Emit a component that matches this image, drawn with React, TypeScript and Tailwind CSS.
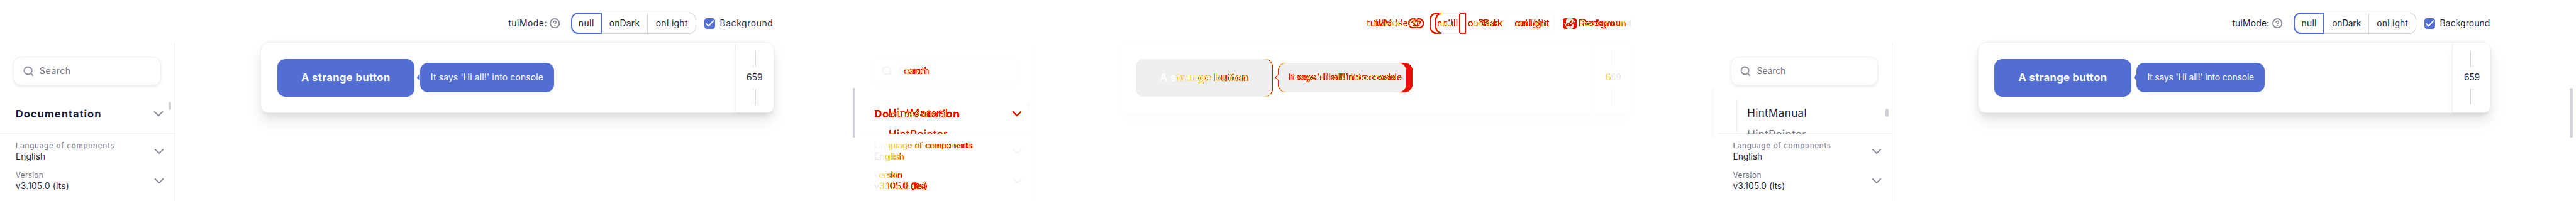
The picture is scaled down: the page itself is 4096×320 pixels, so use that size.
import type { ReactNode } from "react";

type Variant = "before" | "after";

const styles = {
  before: {
    search: "tracking-[0.58px]",
    language: "tracking-[0.72px]",
    english: "tracking-[0px]",
    version: "tracking-[0.34px]",
    number: "tracking-[0.15px]",
    label: "ml-[529.9px] w-[65.6px] tracking-[0.53px]",
    none: "w-[49px] tracking-[0.49px]",
    dark: "w-[73.4px] tracking-[0.2px]",
    light: "w-[77px] tracking-[0.25px]",
    background: "ml-[7.6px] tracking-[0.61px]",
    button: "w-[218.4px] tracking-[0.46px]",
    hint: "ml-[8.8px] w-[213.3px] tracking-[0.17px]",
    width: "tracking-[-0.05px]",
  },
  after: {
    search: "tracking-[-0.1px]",
    language: "tracking-[0.66px]",
    english: "tracking-[-0.1px]",
    version: "tracking-[0.52px]",
    number: "tracking-[-0.02px]",
    label: "ml-[540.2px] w-[64px] tracking-[0.22px]",
    none: "w-[48.9px] tracking-[0.32px]",
    dark: "w-[71px] tracking-[-0.28px]",
    light: "w-[75.2px] tracking-[0.09px]",
    background: "ml-[7.6px] tracking-[0.11px]",
    button: "w-[217.4px] tracking-[0.4px]",
    hint: "ml-[8.6px] w-[204px] tracking-[-0.15px]",
    width: "tracking-[-0.3px]",
  },
};

const normalPalette =
  "[--ink:#1b1f3b] [--muted:#6f7081] [--icon:#8f90a0] [--line:#ededed] [--seg:#d7d7d7] [--accent:#526ed3] [--paper:#ffffff] [--card:#ffffff] [--thumb:#d1d2d8] [--near:rgba(0,0,0,0.07)] [--far:rgba(0,0,0,0.09)]";
const maskPalette =
  "bg-black [--ink:#ffffff] [--muted:#ffffff] [--icon:#ffffff] [--line:transparent] [--seg:transparent] [--accent:#ffffff] [--paper:#000000] [--card:transparent] [--thumb:transparent] [--near:transparent] [--far:transparent]";

function Chevron({ className }: { className: string }) {
  return (
    <svg className={`h-[10px] w-[16px] shrink-0 ${className}`} viewBox="0 0 16 10" fill="none" stroke="var(--icon)" strokeWidth="2.1" strokeLinecap="round" strokeLinejoin="round">
      <path d="M1.7 1.9 8 8.1 14.3 1.9" />
    </svg>
  );
}

function SearchIcon() {
  return (
    <svg className="ml-[14.2px] h-[17px] w-[17px] shrink-0" viewBox="0 0 17 17" fill="none" stroke="var(--icon)" strokeWidth="2.1" strokeLinecap="round">
      <circle cx="7.6" cy="7.6" r="6" />
      <path d="m12 12 3 3" />
    </svg>
  );
}

function HelpIcon() {
  return (
    <svg className="h-[16.3px] w-[16.3px] shrink-0" viewBox="0 0 16 16" fill="none" stroke="var(--icon)" strokeWidth="2" strokeLinecap="round" strokeLinejoin="round">
      <circle cx="8" cy="8" r="7" />
      <path d="M6 6.2c.2-1.1 1-1.8 2.1-1.8 1.2 0 2.1.8 2.1 1.9 0 1.5-2.1 1.7-2.1 2.7" strokeWidth="1.7" />
      <circle cx="8.1" cy="11.5" r="1" fill="var(--icon)" stroke="none" />
    </svg>
  );
}

function Option({ title, value, titleClass, valueClass }: { title: string; value: string; titleClass: string; valueClass: string }) {
  return (
    <div className="flex h-[34px] items-center justify-between pr-[16.3px] pl-[24.9px]">
      <div className="flex flex-col text-[13.87px] leading-[17px] text-[var(--ink)]">
        <span className={`text-[11.73px] text-[var(--muted)] ${titleClass}`}>{title}</span>
        <span className={valueClass}>{value}</span>
      </div>
      <Chevron className="" />
    </div>
  );
}

function Grip() {
  return <div className="h-[25.6px] w-[5.3px] border-x border-[var(--seg)]" />;
}

function NavList({ variant }: { variant: Variant }) {
  if (variant === "before") {
    return (
      <div className="mt-[21.4px] flex h-[55.4px] items-start text-[16.5px] font-bold text-[var(--ink)]">
        <span className="ml-[24.8px] w-[219px] leading-[47px] tracking-[0.99px]">Documentation</span>
        <Chevron className="mt-[18.4px]" />
        <div className="mt-[4.1px] ml-[7.9px] h-[12.8px] w-[4.3px] rounded-full bg-[var(--thumb)]" />
      </div>
    );
  }
  return (
    <div className="relative z-10 mt-[21.4px] flex h-[55.4px] items-start overflow-hidden text-[16.9px]">
      <div className="ml-[29.9px] flex h-[54.4px] w-[237.8px] flex-col border-l border-[var(--line)] pt-[4.8px] pl-[16.6px] leading-[34.1px]">
        <span className="h-[34.1px] shrink-0 tracking-[0.45px] text-[var(--ink)]">HintManual</span>
        <span className="h-[34.1px] shrink-0 tracking-[0.5px] text-[var(--muted)]">HintPointer</span>
      </div>
      <div className="mt-[14.9px] h-[12.8px] w-[4.3px] rounded-full bg-[var(--thumb)]" />
    </div>
  );
}

function Panel({ variant, palette }: { variant: Variant; palette: string }) {
  const s = styles[variant];
  return (
    <div className={`flex h-[320px] w-[1365.33px] shrink-0 items-start whitespace-nowrap ${palette}`}>
      <aside className="mt-[68.27px] flex h-[251.73px] w-[278.4px] shrink-0 flex-col border-r border-[var(--line)]">
        <div className="mt-[21.33px] ml-[21.33px] flex h-[46.9px] w-[234.5px] shrink-0 items-center rounded-[12.8px] border border-[var(--line)] shadow-[0_2px_4px_var(--far)]">
          <SearchIcon />
          <span className={`ml-[9.6px] text-[13.87px] text-[var(--muted)] ${s.search}`}>Search</span>
        </div>
        <NavList variant={variant} />
        <div className="-mt-px flex grow flex-col gap-[12.9px] border-t border-[var(--line)] pt-[10.7px]">
          <Option title="Language of components" value="English" titleClass={s.language} valueClass={s.english} />
          <Option title="Version" value="v3.105.0 (lts)" titleClass={s.version} valueClass={s.number} />
        </div>
      </aside>
      <main className="flex w-[1077.2px] shrink-0 flex-col">
        <div className="mt-[20.2px] flex h-[34.2px] items-center text-[13.87px] text-[var(--ink)]">
          <span className={s.label}>tuiMode:</span>
          <HelpIcon />
          <div className="ml-[17.6px] flex h-[34.2px] text-center leading-[32px]">
            <span className={`rounded-l-[11.5px] border-2 border-[var(--accent)] leading-[30px] ${s.none}`}>null</span>
            <span className={`border-y border-r border-[var(--seg)] ${s.dark}`}>onDark</span>
            <span className={`rounded-r-[11.5px] border-y border-r border-[var(--seg)] ${s.light}`}>onLight</span>
          </div>
          <div className="ml-[12.7px] flex h-[17.1px] w-[17.1px] items-center justify-center rounded-[4.3px] bg-[var(--accent)]">
            <svg className="h-[17px] w-[17px]" viewBox="0 0 16 16" fill="none" stroke="var(--paper)" strokeWidth="1.8" strokeLinecap="round" strokeLinejoin="round">
              <path d="m2.7 8.3 3.4 3.5L13.4 4" />
            </svg>
          </div>
          <span className={s.background}>Background</span>
        </div>
        <section className="mt-[12.8px] ml-[135.6px] flex h-[113.1px] w-[816.8px] items-center rounded-[12.8px] border border-[var(--line)] bg-[var(--card)] shadow-[0_6px_8px_-2px_var(--near),0_13px_21px_var(--far)]">
          <div className={`ml-[25.6px] flex h-[59.7px] items-center justify-center rounded-[12.8px] bg-[var(--accent)] text-[16.5px] font-bold text-[var(--paper)] ${s.button}`}>A strange button</div>
          <div className={`relative flex h-[46.9px] items-center justify-center rounded-[12.8px] bg-[var(--accent)] text-[13.87px] text-[var(--paper)] ${s.hint}`}>
            <svg className="absolute top-[18.2px] left-[-4.3px] h-[10.6px] w-[4.5px]" viewBox="0 0 4.5 10.6" fill="var(--accent)">
              <path d="M4.5 0v10.6L.4 6.3Q-.2 5.3.4 4.3Z" />
            </svg>
            It says 'Hi all!' into console
          </div>
          <div className="ml-auto flex h-full w-[61px] flex-col items-center justify-center gap-[8.55px] rounded-r-[12px] border-l border-[var(--line)] bg-[var(--card)] text-[13.87px] leading-[17px] text-[var(--ink)] shadow-[-4px_6px_8px_-5px_var(--far)]">
            <Grip />
            <span className={s.width}>659</span>
            <Grip />
          </div>
        </section>
      </main>
      <div className="mt-[139.8px] h-[78.9px] w-[4.3px] shrink-0 rounded-full bg-[var(--thumb)]" />
    </div>
  );
}

function Layer({ className, children }: { className: string; children: ReactNode }) {
  return <div className={`absolute inset-0 ${className}`}>{children}</div>;
}

/* Overlays both variants: shared shapes cancel out, changed ones turn red with yellow edges. */
function Comparison() {
  return (
    <div className="relative h-[320px] w-[1365.33px] shrink-0">
      <svg className="absolute h-0 w-0">
        <filter id="edges" x="0" y="0" width="1" height="1" colorInterpolationFilters="sRGB">
          <feComponentTransfer>
            <feFuncR type="table" tableValues="1 1" />
            <feFuncG type="table" tableValues="1 0.9 0.5 0.2 0 0" />
            <feFuncB type="table" tableValues="1 0.35 0 0 0 0" />
          </feComponentTransfer>
        </filter>
      </svg>
      <Layer className="isolate overflow-hidden bg-black [filter:url(#edges)]">
        <Layer className="mix-blend-difference">
          <Panel variant="before" palette={maskPalette} />
        </Layer>
        <Layer className="mix-blend-difference">
          <Panel variant="after" palette={maskPalette} />
        </Layer>
      </Layer>
      <Layer className="opacity-10 grayscale">
        <Panel variant="before" palette={normalPalette} />
      </Layer>
      <div className="absolute top-[139.8px] left-[-9.8px] h-[78.9px] w-[4.3px] rounded-full bg-[#d1d2d8]" />
    </div>
  );
}

export default function App() {
  return (
    <div className="flex h-[320px] w-[4096px] overflow-hidden bg-white font-['Inter',sans-serif]">
      <Panel variant="before" palette={normalPalette} />
      <Comparison />
      <Panel variant="after" palette={normalPalette} />
    </div>
  );
}
